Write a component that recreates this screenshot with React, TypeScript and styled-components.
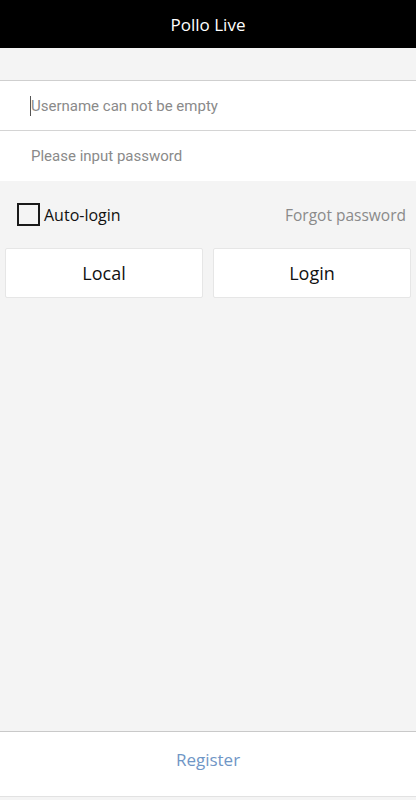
import styled, { createGlobalStyle } from 'styled-components';

const GlobalStyle = createGlobalStyle`
  html, body {
    margin: 0;
    padding: 0;
    background: #f4f4f4;
  }
  * {
    box-sizing: border-box;
  }
`;

const Page = styled.div`
  display: flex;
  flex-direction: column;
  width: 416px;
  height: 800px;
  background: #f4f4f4;
  font-family: 'Open Sans', 'Noto Sans', sans-serif;
`;

const Header = styled.header`
  display: flex;
  height: 48px;
  align-items: center;
  justify-content: center;
  background: #000000;
  color: #ffffff;
  font-size: 17px;
`;

const Form = styled.div`
  margin-top: 32px;
  border-top: 1px solid #cfcfcf;
  background: #ffffff;
`;

const FieldWrap = styled.div<{ $divider?: boolean }>`
  position: relative;
  height: 50px;
  border-bottom: ${({ $divider }) => ($divider ? '1px solid #d4d4d4' : '0')};
`;

const Field = styled.input`
  display: block;
  width: 100%;
  height: 100%;
  padding: 0 31px;
  border: 0;
  outline: none;
  background: #ffffff;
  color: #333333;
  font-family: Roboto, 'Noto Sans', sans-serif;
  font-size: 15px;
  caret-color: transparent;

  &::placeholder {
    color: #8a8a8a;
  }
`;

/* static text cursor, as seen in the focused username field */
const Caret = styled.span`
  position: absolute;
  top: 15px;
  left: 30px;
  width: 1px;
  height: 20px;
  background: #555555;
`;

const OptionsRow = styled.div`
  display: flex;
  height: 67px;
  align-items: center;
  justify-content: space-between;
  padding: 0 10px 0 17px;
`;

const CheckLabel = styled.label`
  display: flex;
  align-items: center;
  gap: 4px;
  color: #111111;
  font-size: 16px;
`;

const CheckBox = styled.span`
  display: block;
  width: 23px;
  height: 23px;
  border: 2px solid #1a1a1a;
  background: transparent;
`;

const ForgotLink = styled.span`
  color: #8a8a8a;
  font-size: 15.5px;
`;

const ButtonRow = styled.div`
  display: grid;
  grid-template-columns: 1fr 1fr;
  gap: 10px;
  padding: 0 5px;
`;

const ActionButton = styled.button`
  height: 50px;
  border: 1px solid #e6e6e6;
  border-radius: 2px;
  background: #ffffff;
  color: #111111;
  font-family: 'Open Sans', 'Noto Sans', sans-serif;
  font-size: 18px;
`;

const Spacer = styled.div`
  flex: 1;
`;

const RegisterBar = styled.div`
  display: flex;
  height: 66px;
  margin-bottom: 3px;
  padding-bottom: 9px;
  align-items: center;
  justify-content: center;
  border-top: 1px solid #c9c9c9;
  border-bottom: 1px solid #e2e2e2;
  background: #ffffff;
  color: #6f96c6;
  font-size: 17px;
`;

export default function App() {
  return (
    <>
      <GlobalStyle />
      <Page>
        <Header>Pollo Live</Header>
        <Form>
          <FieldWrap $divider>
            <Field placeholder="Username can not be empty" />
            <Caret />
          </FieldWrap>
          <FieldWrap>
            <Field type="password" placeholder="Please input password" />
          </FieldWrap>
        </Form>
        <OptionsRow>
          <CheckLabel>
            <CheckBox />
            Auto-login
          </CheckLabel>
          <ForgotLink>Forgot password</ForgotLink>
        </OptionsRow>
        <ButtonRow>
          <ActionButton>Local</ActionButton>
          <ActionButton>Login</ActionButton>
        </ButtonRow>
        <Spacer />
        <RegisterBar>Register</RegisterBar>
      </Page>
    </>
  );
}
